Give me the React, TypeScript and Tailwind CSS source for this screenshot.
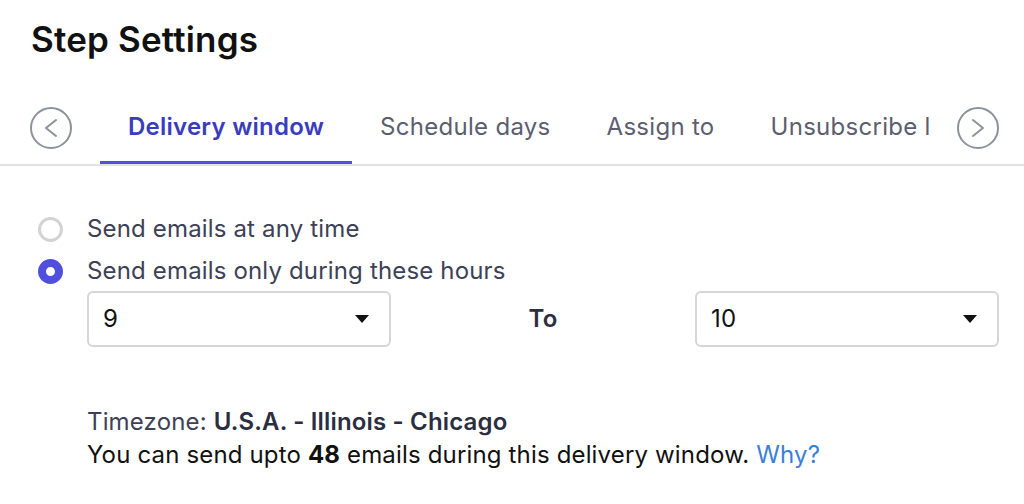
const tabs = ["Delivery window", "Schedule days", "Assign to", "Unsubscribe link"];

function CircleArrow({ dir }: { dir: "left" | "right" }) {
  return (
    <button className="w-[42px] h-[42px] shrink-0 rounded-full border-2 border-[#8e909c] flex items-center justify-center text-[#8e909c]">
      <svg width="20" height="22" viewBox="0 0 20 22" fill="none" stroke="currentColor" strokeWidth="2" strokeLinecap="round" strokeLinejoin="round">
        {dir === "left" ? <path d="M15 3 L5 11 L15 19" /> : <path d="M5 3 L15 11 L5 19" />}
      </svg>
    </button>
  );
}

function Select({ value }: { value: string }) {
  return (
    <div className="w-[304px] h-[56px] border-2 border-[#d6d6d6] rounded-[6px] flex items-center justify-between pl-[14px] pr-[20px] text-[24px] text-[#111]">
      <span>{value}</span>
      <svg width="14" height="8" viewBox="0 0 14 8">
        <path d="M0 0 L14 0 L7 8 Z" fill="#111" />
      </svg>
    </div>
  );
}

export default function App() {
  return (
    <div className="w-[1024px] h-[504px] bg-white overflow-hidden tracking-[0.01em]" style={{ fontFamily: "Inter, 'Noto Sans', sans-serif" }}>
      <h1 className="pl-[31px] pt-[17px] text-[35px] leading-[44px] font-semibold text-[#111] tracking-[0.005em]">Step Settings</h1>

      {/* Tabs */}
      <div className="mt-[31px] border-b-2 border-[#e2e2e4] flex items-center pl-[30px] pr-[25px] h-[74px]">
        <CircleArrow dir="left" />
        <div className="flex-1 flex overflow-hidden ml-[28px] mr-[26px] self-stretch">
          {tabs.map((t, i) => (
            <div
              key={t}
              className={`px-[28px] flex items-center whitespace-nowrap text-[24px] border-b-[3px] ${
                i === 0
                  ? "border-[#4f4fe0] text-[#3a3cc0] font-semibold tracking-[0.01em]"
                  : "border-transparent text-[#5b5e6e] tracking-[0.012em]"
              }`}
            >
              {t}
            </div>
          ))}
        </div>
        <CircleArrow dir="right" />
      </div>

      {/* Radios */}
      <div className="pl-[38px] pt-[51px] flex flex-col gap-[18px]">
        <label className="flex items-center gap-[24px] h-[24px]">
          <span className="w-[25px] h-[25px] rounded-full border-[3px] border-[#d3d3d3] shrink-0" />
          <span className="text-[24px] leading-[24px] text-[#3d4156]">Send emails at any time</span>
        </label>
        <label className="flex items-center gap-[24px] h-[24px]">
          <span className="w-[25px] h-[25px] rounded-full border-[8px] border-[#5150de] bg-white shrink-0" />
          <span className="text-[24px] leading-[24px] text-[#3d4156]">Send emails only during these hours</span>
        </label>
      </div>

      <div className="pl-[87px] pr-[25px] mt-[8px] flex items-center">
        <Select value="9" />
        <div className="flex-1 flex justify-center text-[24px] font-semibold text-[#2b2e40]">To</div>
        <Select value="10" />
      </div>

      <div className="pl-[87px] mt-[58px] text-[24px] leading-[33px]">
        <div className="text-[#3d4156]">
          Timezone: <span className="font-semibold text-[#2b2e40]">U.S.A. - Illinois - Chicago</span>
        </div>
        <div className="text-[#111]">
          You can send upto <span className="font-bold">48</span> emails during this delivery window.{" "}
          <a className="text-[#3b7fd9]">Why?</a>
        </div>
      </div>
    </div>
  );
}
